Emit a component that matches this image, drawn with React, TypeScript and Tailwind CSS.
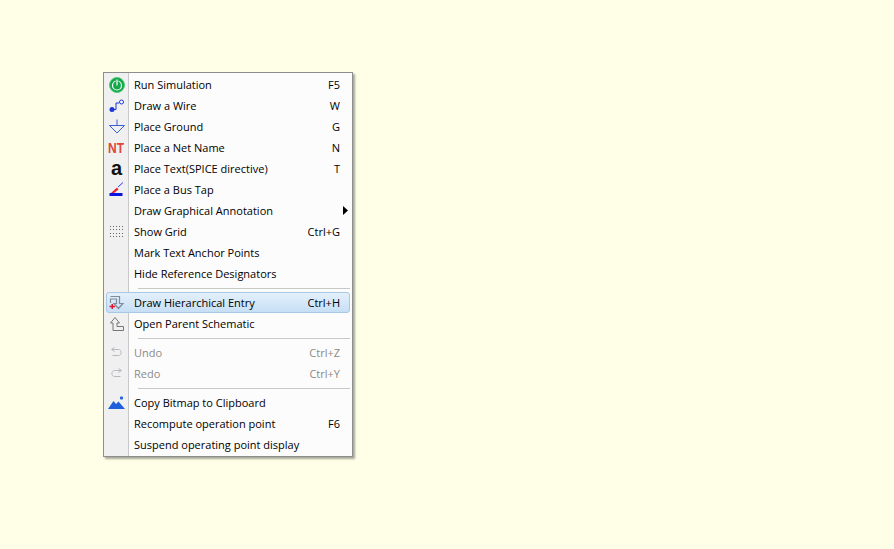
import type { ReactNode } from 'react';

type Item = {
  label?: string;
  keys?: string;
  icon?: ReactNode;
  disabled?: boolean;
  active?: boolean;
  arrow?: boolean;
  separator?: boolean;
};

const RunIcon = () => (
  <svg width="16" height="16" viewBox="0 0 16 16">
    <circle cx="8" cy="8" r="7.5" fill="#13a84a" stroke="#4fc978" strokeWidth="1" />
    <circle cx="8" cy="8.5" r="4.5" fill="none" stroke="#fff" strokeWidth="1.2" />
    <rect x="6.6" y="2" width="2.8" height="6" fill="#13a84a" />
    <rect x="7.4" y="2.5" width="1.2" height="6" fill="#fff" />
  </svg>
);

const WireIcon = () => (
  <svg width="16" height="16" viewBox="0 0 16 16">
    <circle cx="3" cy="11.5" r="2.5" fill="#1a35d8" />
    <path d="M3 11.5H7V5H10" fill="none" stroke="#1a35d8" strokeWidth="1" />
    <circle cx="12.5" cy="4" r="2" fill="#fff" stroke="#1a35d8" strokeWidth="1" />
  </svg>
);

const GroundIcon = () => (
  <svg width="16" height="16" viewBox="0 0 16 16">
    <path d="M8 0.5V6.5M0.5 6.5H15.5L8 14Z" fill="none" stroke="#3a5fd0" strokeWidth="1" />
  </svg>
);

const BusTapIcon = () => (
  <svg width="16" height="16" viewBox="0 0 16 16">
    <rect x="0.5" y="11" width="13" height="3" fill="#0a14e0" />
    <path d="M2 11L8 5.5L9.5 7.5L5 11Z" fill="#e8232f" />
    <path d="M9 5L14 0.5" stroke="#2a3ee0" strokeWidth="1" />
  </svg>
);

const GridIcon = () => (
  <svg width="14" height="12" viewBox="0 0 14 12" fill="#666">
    {[0, 3, 7, 10].map((y) =>
      [0, 3, 6, 9, 12].map((x) => <rect key={`${x}-${y}`} x={x} y={y} width="1" height="1" />),
    )}
  </svg>
);

const EntryIcon = () => (
  <svg width="16" height="16" viewBox="0 0 16 16">
    <path d="M1.5 1.5H10.5V8.5H14L9.5 13.5L5 8.5H7.5V4H1.5V8" fill="none" stroke="#7f8c99" strokeWidth="1.2" />
    <path d="M0.5 11.5H6M3.25 9V14" stroke="#e8142c" strokeWidth="1.5" />
  </svg>
);

const ParentIcon = () => (
  <svg width="16" height="14" viewBox="0 0 16 14">
    <path d="M1.5 6L6 0.5L10.5 6H8V9.5H14.5V13.5H4V6Z" fill="none" stroke="#777" strokeWidth="1" />
  </svg>
);

const UndoIcon = () => (
  <svg width="11" height="11" viewBox="0 0 11 11">
    <path d="M3.5 0.5L0.5 2.5L3.5 4.5M1 2.5H7.5C11 2.5 11 8.5 7.5 8.5H1.5" fill="none" stroke="#b5b9bf" strokeWidth="1" />
  </svg>
);

const RedoIcon = () => (
  <svg width="11" height="11" viewBox="0 0 11 11">
    <path d="M7.5 0.5L10.5 2.5L7.5 4.5M10 2.5H3.5C0 2.5 0 8.5 3.5 8.5H9.5" fill="none" stroke="#b5b9bf" strokeWidth="1" />
  </svg>
);

const BitmapIcon = () => (
  <svg width="18" height="14" viewBox="0 0 18 14">
    <path d="M0 13L5.5 5L8 8L10.5 5.5L17 13Z" fill="#1f5fdc" />
    <rect x="12" y="0.5" width="3" height="3" rx="1" fill="#1f5fdc" />
  </svg>
);

const items: Item[] = [
  { label: 'Run Simulation', keys: 'F5', icon: <RunIcon /> },
  { label: 'Draw a Wire', keys: 'W', icon: <WireIcon /> },
  { label: 'Place Ground', keys: 'G', icon: <GroundIcon /> },
  {
    label: 'Place a Net Name',
    keys: 'N',
    icon: (
      <span className="-ml-[2px] scale-x-[0.8] font-['Liberation_Sans',sans-serif] text-[15px] font-bold leading-none text-[#e2453a]">
        NT
      </span>
    ),
  },
  {
    label: 'Place Text(SPICE directive)',
    keys: 'T',
    icon: <span className="pb-[1px] font-['Liberation_Sans',sans-serif] text-[20px] font-bold leading-none text-[#111]">a</span>,
  },
  { label: 'Place a Bus Tap', icon: <BusTapIcon /> },
  { label: 'Draw Graphical Annotation', arrow: true },
  { label: 'Show Grid', keys: 'Ctrl+G', icon: <GridIcon /> },
  { label: 'Mark Text Anchor Points' },
  { label: 'Hide Reference Designators' },
  { separator: true },
  { label: 'Draw Hierarchical Entry', keys: 'Ctrl+H', icon: <EntryIcon />, active: true },
  { label: 'Open Parent Schematic', icon: <ParentIcon /> },
  { separator: true },
  { label: 'Undo', keys: 'Ctrl+Z', icon: <UndoIcon />, disabled: true },
  { label: 'Redo', keys: 'Ctrl+Y', icon: <RedoIcon />, disabled: true },
  { separator: true },
  { label: 'Copy Bitmap to Clipboard', icon: <BitmapIcon /> },
  { label: 'Recompute operation point', keys: 'F6' },
  { label: 'Suspend operating point display' },
];

function Row({ item }: { item: Item }) {
  if (item.separator) {
    return (
      <div className="flex h-[8px] items-center pl-[32px]">
        <div className="h-px w-full bg-[#c8c8c8]" />
      </div>
    );
  }
  return (
    <div
      className={`flex h-[21px] items-center rounded-[3px] border ${
        item.active
          ? 'border-[#a8c8e4] bg-gradient-to-b from-[#e4f0fb] to-[#c6dff5]'
          : 'border-transparent'
      } ${item.disabled ? 'text-[#8a8a8a]' : 'text-[#000]'}`}
    >
      <div className="flex w-[19px] shrink-0 items-center justify-center">{item.icon}</div>
      <span className="ml-[8px] flex-1 whitespace-nowrap pt-[2px]">{item.label}</span>
      {item.keys && <span className="mr-[9px] whitespace-nowrap pt-[2px]">{item.keys}</span>}
      {item.arrow && (
        <svg className="mr-[1px]" width="5" height="9" viewBox="0 0 5 9">
          <path d="M0 0L5 4.5L0 9Z" fill="#000" />
        </svg>
      )}
    </div>
  );
}

export default function App() {
  return (
    <div className="h-[549px] w-[894px] bg-[#ffffe8] pl-[103px] pt-[72px]">
      <div className="relative w-[250px] border border-[#8e8e8e] bg-[#fcfcfc] px-[2px] pb-[1px] pt-[1px] font-['Open_Sans',sans-serif] text-[11px] shadow-[2px_2px_2px_rgba(0,0,0,0.35)]">
        <div className="absolute bottom-0 left-0 top-0 w-[25px] border-r border-r-[#c8c8c8] bg-[#f0f0f0]" />
        <div className="relative">
          {items.map((item, i) => (
            <Row key={i} item={item} />
          ))}
        </div>
      </div>
    </div>
  );
}
